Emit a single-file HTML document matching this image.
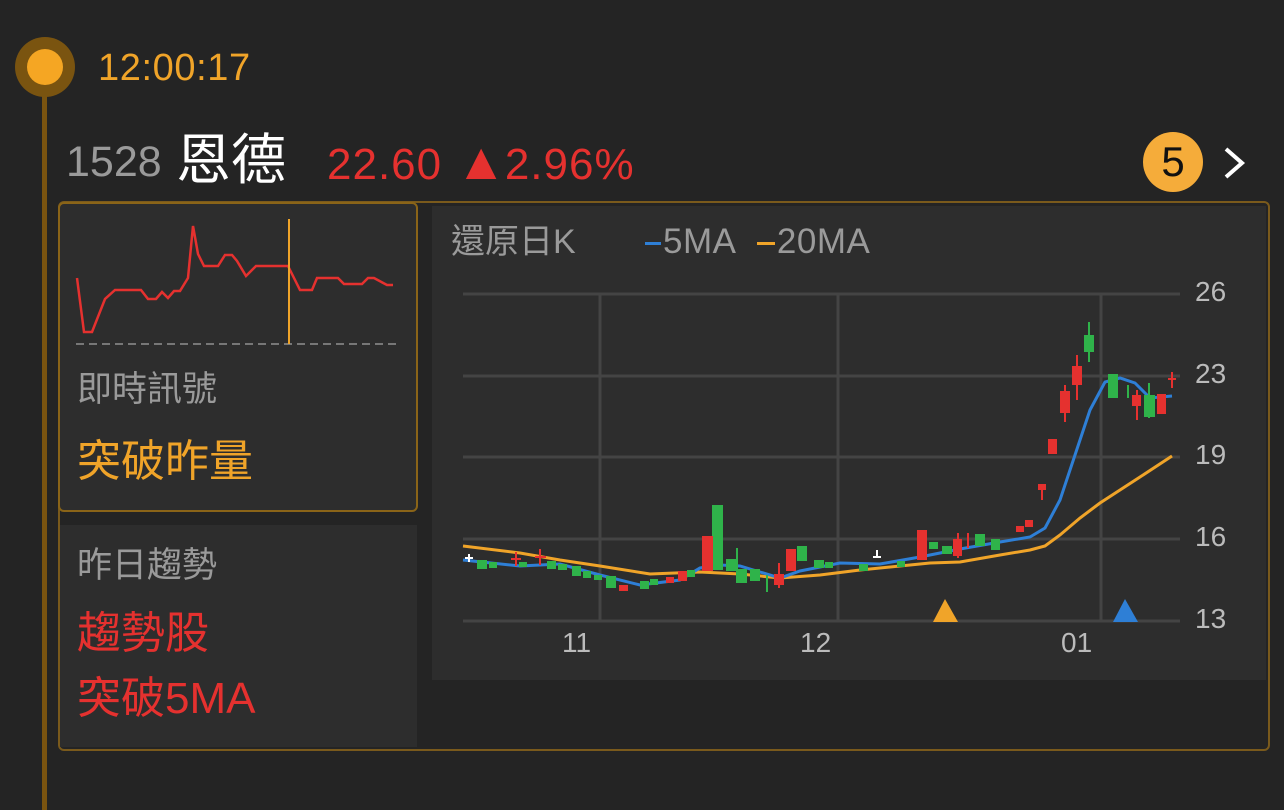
<!DOCTYPE html>
<html><head><meta charset="utf-8"><style>
body{margin:0;width:1284px;height:810px;background:#242424;position:relative;overflow:hidden;font-family:"Liberation Sans","Noto Sans CJK TC",sans-serif}
.a{position:absolute;white-space:nowrap}
.bar{display:inline-block;width:14px;height:3px;vertical-align:middle;margin-right:2px}
</style></head><body>
<div class="a" style="left:42px;top:70px;width:5px;height:740px;background:#7a5410"></div>
<div class="a" style="left:15px;top:37px;width:60px;height:60px;border-radius:50%;background:#7a5410"></div>
<div class="a" style="left:27px;top:49px;width:36px;height:36px;border-radius:50%;background:#f5a623"></div>
<div class="a" style="left:98px;top:46px;font-size:38px;color:#f0a429;line-height:44px;letter-spacing:0.6px">12:00:17</div>
<div class="a" style="left:66px;top:138px;font-size:43px;color:#9a9a9a;line-height:48px">1528</div>
<div class="a" style="left:176px;top:130px;font-size:55px;color:#fff;line-height:60px">恩德</div>
<div class="a" style="left:327px;top:138px;font-size:44px;color:#e5312f;line-height:48px;letter-spacing:1px">22.60 <span style="font-size:52px;letter-spacing:-2px">▲</span>2.96%</div>
<div class="a" style="left:1143px;top:132px;width:60px;height:60px;border-radius:50%;background:#f5ac3a;color:#111;font-size:42px;line-height:60px;text-align:center">5</div>
<svg class="a" style="left:1220px;top:145px" width="30" height="35"><path d="M6 4 L22 18 L6 32" stroke="#fff" stroke-width="4" fill="none"/></svg>
<div class="a" style="left:58px;top:201px;width:1208px;height:546px;border:2px solid #7a5a1c;border-radius:6px"></div>
<div class="a" style="left:60px;top:525px;width:357px;height:222px;background:#2d2d2d"></div>
<div class="a" style="left:432px;top:206px;width:834px;height:474px;background:#2d2d2d"></div>
<div class="a" style="left:58px;top:202px;width:356px;height:306px;border:2px solid #8a6418;border-radius:6px;background:#2d2d2d"></div>
<svg class="a" style="left:60px;top:204px" width="350" height="150">
<line x1="16" y1="140" x2="340" y2="140" stroke="#777" stroke-width="2" stroke-dasharray="8,5"/>
<polyline fill="none" stroke="#e5312f" stroke-width="2.5" points="17,74 24,128 32,128 45,95 55,86 81,86 88,95 96,95 102,88 108,94 114,87 120,87 128,74 133,22 138,50 144,62 158,62 165,51 172,51 177,57 186,72 196,62 228,62 240,86 252,86 257,74 278,74 284,80 302,80 308,74 314,74 327,81 333,81"/>
<line x1="229" y1="15" x2="229" y2="140" stroke="#f0a429" stroke-width="2"/>
</svg>
<div class="a" style="left:77px;top:370px;font-size:35px;color:#9a9a9a;line-height:40px">即時訊號</div>
<div class="a" style="left:77px;top:438px;font-size:44px;color:#f0a429;line-height:48px">突破昨量</div>
<div class="a" style="left:77px;top:546px;font-size:35px;color:#9a9a9a;line-height:40px">昨日趨勢</div>
<div class="a" style="left:77px;top:610px;font-size:44px;color:#e5312f;line-height:48px">趨勢股</div>
<div class="a" style="left:77px;top:675px;font-size:44px;color:#e5312f;line-height:48px">突破5MA</div>
<div class="a" style="left:451px;top:222px;font-size:34px;color:#9a9a9a;line-height:40px">還原日K</div>
<div class="a" style="left:645px;top:222px;font-size:35px;color:#9a9a9a;line-height:40px;letter-spacing:0.5px"><span class="bar" style="background:#2e7fd6;width:16px"></span>5MA&nbsp;&nbsp;<span class="bar" style="background:#f0a429;width:18px"></span>20MA</div>
<svg class="a" style="left:0;top:0" width="1284" height="810">
<g stroke="#444" stroke-width="3">
<line x1="463" y1="294" x2="1180" y2="294"/><line x1="463" y1="376" x2="1180" y2="376"/><line x1="463" y1="457" x2="1180" y2="457"/><line x1="463" y1="539" x2="1180" y2="539"/><line x1="463" y1="621" x2="1180" y2="621"/>
<line x1="600" y1="294" x2="600" y2="621"/><line x1="838" y1="294" x2="838" y2="621"/><line x1="1101" y1="294" x2="1101" y2="621"/>
</g>
<g font-size="28" fill="#bbb" font-family="Liberation Sans,sans-serif">
<text x="1195" y="301">26</text><text x="1195" y="383">23</text><text x="1195" y="464">19</text><text x="1195" y="546">16</text><text x="1195" y="628">13</text>
<text x="562" y="652">11</text><text x="800" y="652">12</text><text x="1061" y="652">01</text>
</g>
<polyline fill="none" stroke="#f0a429" stroke-width="3" points="463,546 520,553 560,560 600,566 650,574 700,572 740,574 780,578 820,575 860,570 900,566 930,563 960,562 1000,555 1030,550 1045,546 1060,535 1080,518 1100,503 1120,490 1140,477 1172,456"/>
<polyline fill="none" stroke="#2e7fd6" stroke-width="3" points="463,560 520,566 560,564 600,575 640,585 680,580 700,568 720,565 740,566 760,572 780,578 800,571 840,563 880,564 920,557 960,549 1000,542 1030,537 1045,528 1060,500 1075,455 1090,410 1105,382 1120,378 1135,383 1150,398 1172,396"/>
<g stroke-width="2">
<g fill="#2fb34a" stroke="#2fb34a">
<rect x="478" y="561" width="8" height="7"/><rect x="490" y="563" width="6" height="4"/><rect x="520" y="563" width="6" height="3"/><rect x="548" y="562" width="7" height="6"/><rect x="559" y="565" width="7" height="4"/><rect x="573" y="567" width="7" height="8"/><rect x="584" y="572" width="6" height="5"/><rect x="595" y="576" width="6" height="3"/><rect x="607" y="577" width="8" height="10"/><rect x="641" y="582" width="7" height="6"/><rect x="651" y="580" width="6" height="4"/><rect x="688" y="571" width="6" height="5"/><rect x="713" y="506" width="9" height="63"/><rect x="727" y="560" width="8" height="10"/><rect x="737" y="570" width="9" height="12"/><rect x="751" y="570" width="8" height="10"/><line x1="767" y1="575" x2="767" y2="592"/><rect x="798" y="547" width="8" height="13"/><rect x="815" y="561" width="8" height="6"/><rect x="826" y="563" width="6" height="4"/><rect x="860" y="565" width="7" height="5"/><rect x="898" y="562" width="6" height="4"/><rect x="943" y="547" width="8" height="6"/><rect x="976" y="535" width="8" height="10"/><rect x="992" y="540" width="7" height="9"/><rect x="1085" y="336" width="8" height="15"/><line x1="1089" y1="322" x2="1089" y2="362"/><rect x="1109" y="375" width="8" height="22"/><rect x="1145" y="396" width="9" height="20"/><line x1="1128" y1="385" x2="1128" y2="398"/><rect x="930" y="543" width="7" height="5"/><rect x="740" y="570" width="6" height="3"/><line x1="737" y1="548" x2="737" y2="580"/><line x1="1149" y1="383" x2="1149" y2="418"/>
</g>
<g fill="#e5312f" stroke="#e5312f">
<line x1="516" y1="552" x2="516" y2="566"/><line x1="511" y1="559" x2="521" y2="559"/><rect x="620" y="586" width="7" height="4"/><rect x="667" y="578" width="6" height="4"/><rect x="679" y="572" width="7" height="8"/><rect x="703" y="537" width="9" height="33"/><rect x="775" y="575" width="8" height="9"/><line x1="779" y1="563" x2="779" y2="588"/><rect x="787" y="550" width="8" height="20"/><rect x="918" y="531" width="8" height="28"/><rect x="954" y="540" width="7" height="15"/><line x1="958" y1="533" x2="958" y2="558"/><line x1="968" y1="533" x2="968" y2="548"/><rect x="1017" y="527" width="6" height="4"/><rect x="1026" y="521" width="6" height="5"/><rect x="1039" y="485" width="6" height="4"/><line x1="1042" y1="485" x2="1042" y2="500"/><rect x="1049" y="440" width="7" height="13"/><rect x="1061" y="392" width="8" height="20"/><line x1="1065" y1="385" x2="1065" y2="422"/><rect x="1073" y="367" width="8" height="17"/><line x1="1077" y1="355" x2="1077" y2="400"/><rect x="1133" y="396" width="7" height="9"/><line x1="1137" y1="390" x2="1137" y2="420"/><rect x="1158" y="395" width="7" height="18"/><line x1="1172" y1="372" x2="1172" y2="388"/><line x1="1168" y1="379" x2="1176" y2="379"/><line x1="540" y1="549" x2="540" y2="565"/><line x1="535" y1="557" x2="546" y2="557"/>
</g>
<path d="M465 558 h8 M469 554 v8 M873 557 h8 M877 550 v7" stroke="#fff"/>
</g>
<polygon points="933,622 945,599 958,622" fill="#f0a429"/>
<polygon points="1113,622 1125,599 1138,622" fill="#2e7fd6"/>
</svg>
</body></html>
